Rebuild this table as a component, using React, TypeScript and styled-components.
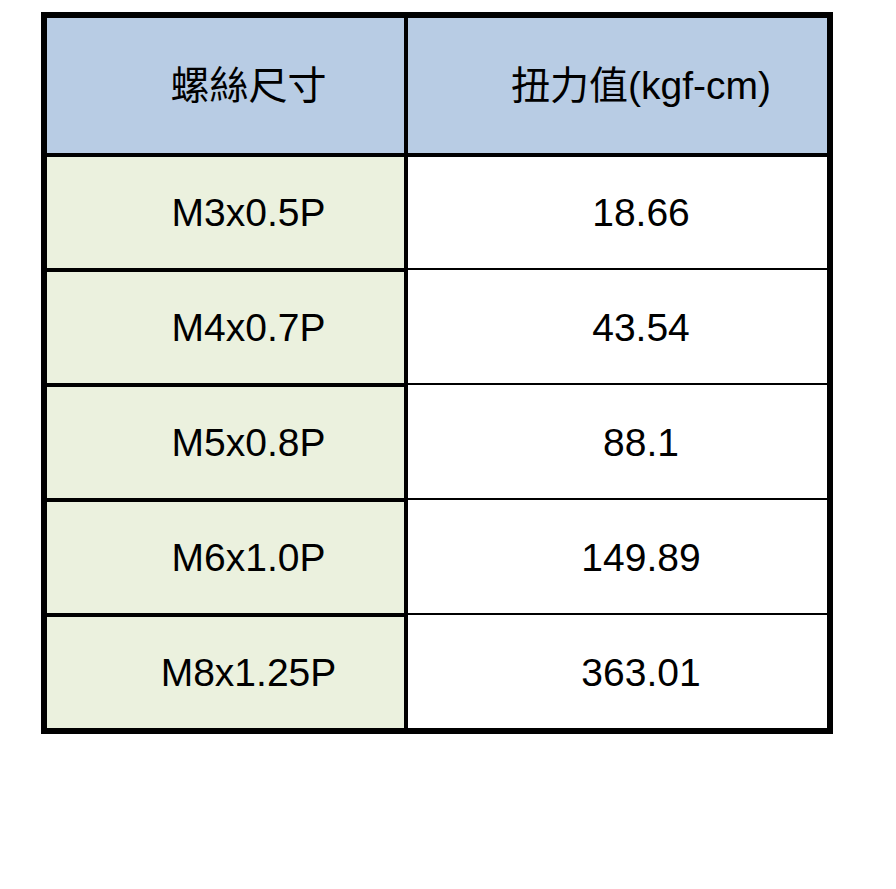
import React from 'react';
import styled, { createGlobalStyle } from 'styled-components';

const GlobalStyle = createGlobalStyle`
    html, body {
        margin: 0;
        padding: 0;
        background: #ffffff;
    }
    body {
        font-family: "Liberation Sans", "Noto Sans CJK TC", Arial, sans-serif;
    }
`;

const Page = styled.div`
    width: 896px;
    height: 889px;
    padding: 12px 0 0 41px;
    box-sizing: border-box;
`;

const Table = styled.div`
    width: 792px;
    box-sizing: border-box;
    border: 6px solid #000000;
    display: grid;
    grid-template-columns: 361px 419px;
    grid-template-rows: 139px repeat(4, 115px) 111px;
    background: #ffffff;
`;

const Cell = styled.div<{ $head?: boolean; $left?: boolean; $last?: boolean }>`
    box-sizing: border-box;
    display: flex;
    align-items: center;
    justify-content: center;
    padding-left: ${(p) => (p.$left ? '46px' : '47px')};
    background: ${(p) => (p.$head ? '#b8cce4' : p.$left ? '#ebf1de' : '#ffffff')};
    border-right: ${(p) => (p.$left ? '4px solid #000000' : 'none')};
    border-bottom: ${(p) =>
        p.$last ? 'none' : p.$head || p.$left ? '4px solid #000000' : '2px solid #000000'};
    height: ${(p) => (p.$head || p.$left || p.$last ? '100%' : 'calc(100% - 2px)')};
    color: #000000;
    font-size: ${(p) => (p.$head ? '39px' : '39px')};
    line-height: 1;
    white-space: nowrap;
`;

const rows: [string, string][] = [
    ['M3x0.5P', '18.66'],
    ['M4x0.7P', '43.54'],
    ['M5x0.8P', '88.1'],
    ['M6x1.0P', '149.89'],
    ['M8x1.25P', '363.01'],
];

const App = () => {
    return (
        <>
            <GlobalStyle />
            <Page>
                <Table>
                    <Cell $head $left>螺絲尺寸</Cell>
                    <Cell $head>扭力值(kgf-cm)</Cell>
                    {rows.map(([size, torque], i) => {
                        const last = i === rows.length - 1;
                        return (
                            <React.Fragment key={size}>
                                <Cell $left $last={last}>{size}</Cell>
                                <Cell $last={last}>{torque}</Cell>
                            </React.Fragment>
                        );
                    })}
                </Table>
            </Page>
        </>
    );
};

export default App;
